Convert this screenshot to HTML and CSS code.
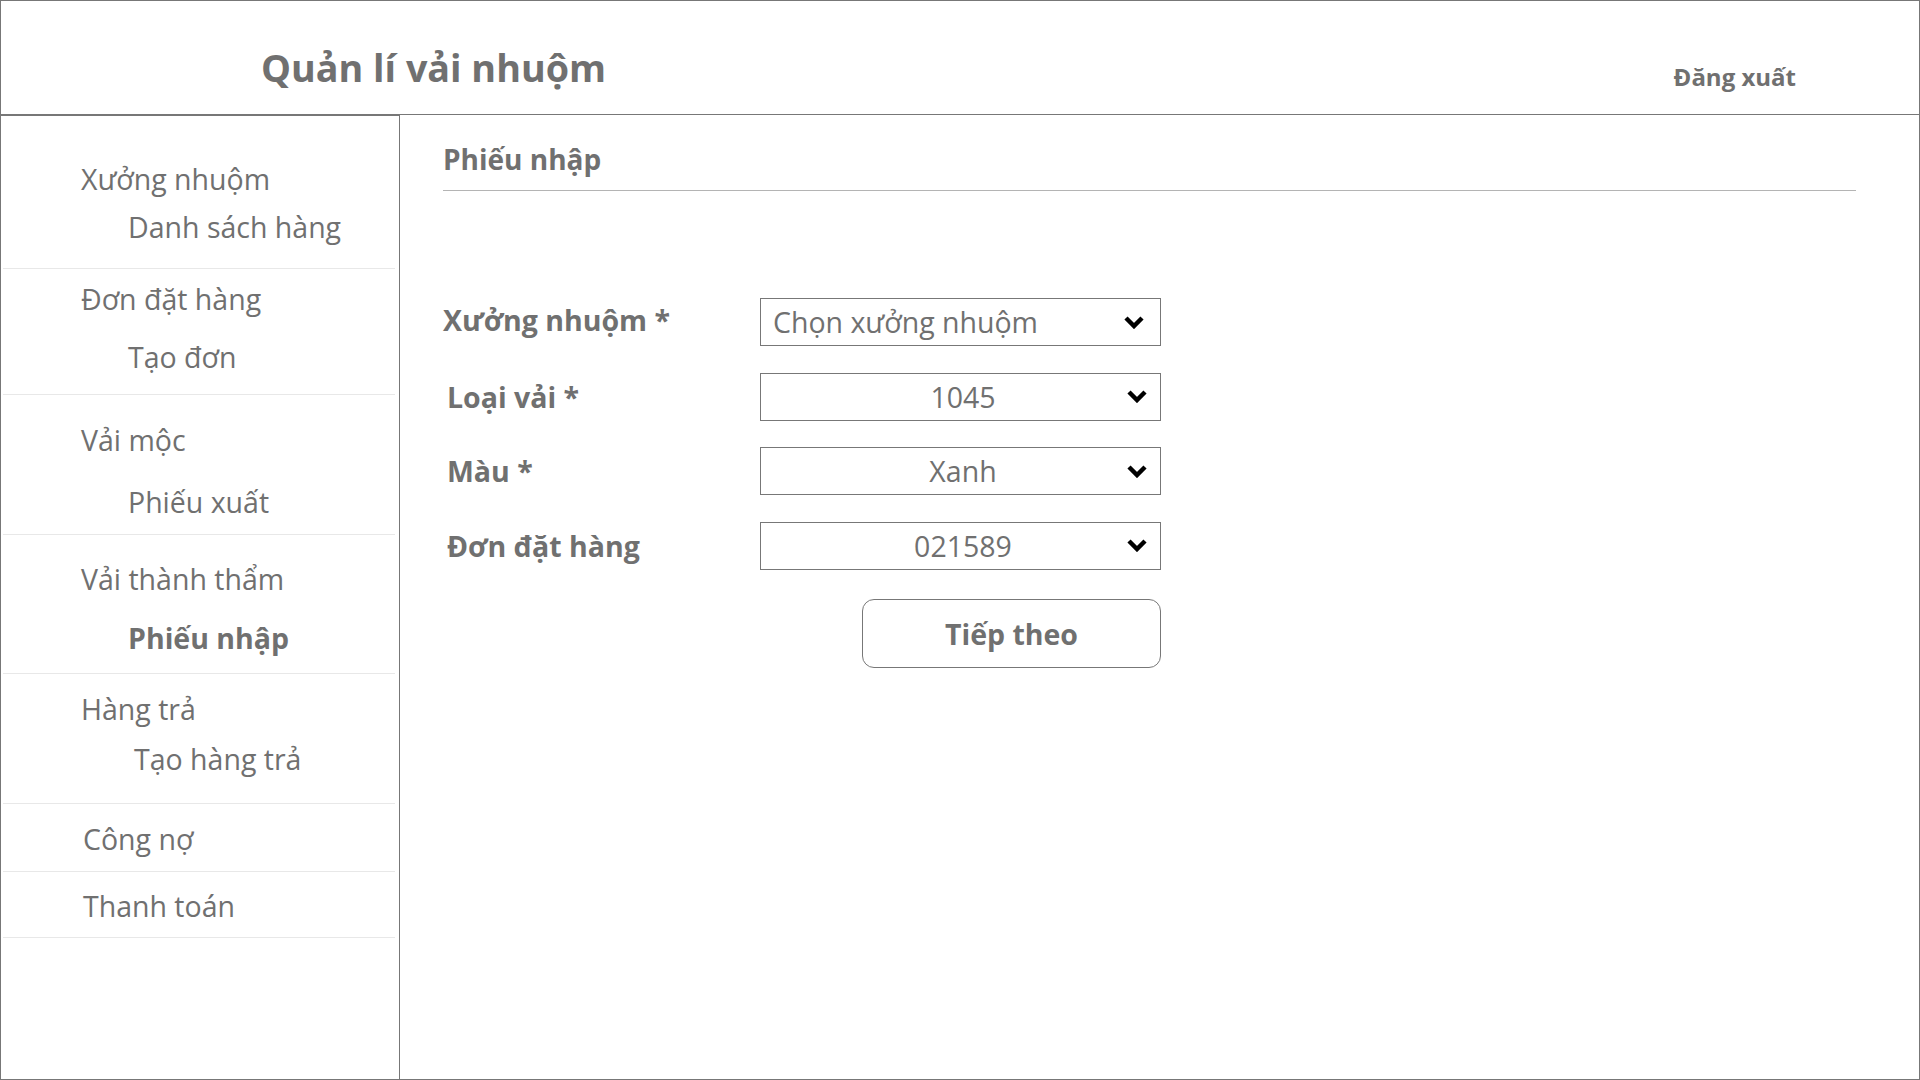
FILE: index.html
```html
<!DOCTYPE html>
<html lang="vi">
<head>
<meta charset="utf-8">
<title>Quản lí vải nhuộm</title>
<link rel="stylesheet" href="styles.css">
</head>
<body>
<div class="page">
  <header class="header">
    <h1 class="title">Quản lí vải nhuộm</h1>
    <a class="logout">Đăng xuất</a>
  </header>
  <div class="body">
    <nav class="sidebar">
      <div class="group">
        <div class="item">Xưởng nhuộm</div>
        <div class="sub">Danh sách hàng</div>
      </div>
      <div class="group">
        <div class="item">Đơn đặt hàng</div>
        <div class="sub">Tạo đơn</div>
      </div>
      <div class="group">
        <div class="item">Vải mộc</div>
        <div class="sub">Phiếu xuất</div>
      </div>
      <div class="group">
        <div class="item">Vải thành thẩm</div>
        <div class="sub active">Phiếu nhập</div>
      </div>
      <div class="group">
        <div class="item">Hàng trả</div>
        <div class="sub sub-wide">Tạo hàng trả</div>
      </div>
      <div class="group">
        <div class="item item-wide">Công nợ</div>
      </div>
      <div class="group">
        <div class="item item-wide">Thanh toán</div>
      </div>
    </nav>
    <main class="main">
      <h2 class="page-title">Phiếu nhập</h2>
      <form class="form">
        <div class="row">
          <label class="label label-first">Xưởng nhuộm *</label>
          <div class="select select-left">
            <span class="value">Chọn xưởng nhuộm</span>
            <svg class="chev" width="20" height="13" viewBox="0 0 20 13"><polyline points="2,2 10,10 18,2" fill="none" stroke="#000" stroke-width="4.5"/></svg>
          </div>
        </div>
        <div class="row">
          <label class="label">Loại vải *</label>
          <div class="select">
            <span class="value">1045</span>
            <svg class="chev" width="20" height="13" viewBox="0 0 20 13"><polyline points="2,2 10,10 18,2" fill="none" stroke="#000" stroke-width="4.5"/></svg>
          </div>
        </div>
        <div class="row">
          <label class="label">Màu *</label>
          <div class="select">
            <span class="value">Xanh</span>
            <svg class="chev" width="20" height="13" viewBox="0 0 20 13"><polyline points="2,2 10,10 18,2" fill="none" stroke="#000" stroke-width="4.5"/></svg>
          </div>
        </div>
        <div class="row">
          <label class="label">Đơn đặt hàng</label>
          <div class="select">
            <span class="value">021589</span>
            <svg class="chev" width="20" height="13" viewBox="0 0 20 13"><polyline points="2,2 10,10 18,2" fill="none" stroke="#000" stroke-width="4.5"/></svg>
          </div>
        </div>
        <div class="actions">
          <button type="button" class="btn">Tiếp theo</button>
        </div>
      </form>
    </main>
  </div>
</div>
</body>
</html>
```
FILE: styles.css
```css
* { box-sizing: border-box; }
html, body { margin: 0; padding: 0; }
body {
  font-family: "Open Sans", "Noto Sans", sans-serif;
  color: #707070;
  background: #fff;
}
.page {
  width: 1920px;
  height: 1080px;
  border: 1px solid #777;
  display: flex;
  flex-direction: column;
}
.header {
  height: 114px;
  flex: none;
  border-bottom: 1px solid #777;
  display: flex;
  align-items: flex-start;
  justify-content: space-between;
  padding-left: 260px;
  padding-right: 123px;
}
.title {
  margin: 0;
  padding-top: 45px;
  font-size: 37.7px;
  font-weight: 700;
  line-height: 44px;
}
.logout {
  font-size: 24px;
  font-weight: 700;
  line-height: 30px;
  padding-top: 61px;
}
.body {
  flex: 1;
  display: flex;
  min-height: 0;
}
.sidebar {
  width: 399px;
  flex: none;
  border-right: 1px solid #777;
  border-top: 1px solid #777;
}
.group {
  border-bottom: 1px solid #e8e8e8;
  width: 392px;
  margin-left: 2px;
}
.item, .sub {
  font-size: 28.5px;
  line-height: 36px;
  white-space: nowrap;
}
.item { padding-left: 78px; }
.item-wide { padding-left: 80px; }
.sub { padding-left: 125px; }
.sub-wide { padding-left: 131px; }
.active { font-weight: 700; }

.group:nth-child(1) { padding: 45px 0 23px; }
.group:nth-child(1) .sub { margin-top: 12px; }
.group:nth-child(2) { padding: 12px 0 19px; }
.group:nth-child(2) .sub { margin-top: 22px; }
.group:nth-child(3) { padding: 27px 0 14px; }
.group:nth-child(3) .sub { margin-top: 26px; }
.group:nth-child(4) { padding: 26px 0 17px; }
.group:nth-child(4) .sub { margin-top: 23px; }
.group:nth-child(5) { padding: 17px 0 26px; }
.group:nth-child(5) .sub { margin-top: 14px; }
.group:nth-child(6) { padding: 17px 0 14px; }
.group:nth-child(7) { padding: 16px 0 13px; }

.main {
  flex: 1;
  padding-left: 43px;
  padding-right: 63px;
}
.page-title {
  margin: 0;
  padding-top: 24px;
  padding-bottom: 11px;
  font-size: 28px;
  line-height: 40px;
  font-weight: 700;
  border-bottom: 1px solid #b4b4b4;
}
.form {
  margin-top: 107px;
  display: flex;
  flex-direction: column;
  gap: 26.5px;
  width: 718px;
}
.row {
  display: flex;
  align-items: center;
}
.label {
  width: 317px;
  font-size: 28.5px;
  font-weight: 700;
  padding-left: 4px;
}
.label-first { padding-left: 0; margin-top: -5px; }
.select {
  width: 401px;
  height: 48px;
  border: 1px solid #777;
  display: flex;
  align-items: center;
  font-size: 28.5px;
}
.select .value {
  flex: 1;
  text-align: center;
  padding-left: 38px;
}
.select-left .value {
  text-align: left;
  padding-left: 12px;
}
.chev {
  flex: none;
  margin-right: 13px;
}
.select-left .chev { margin-right: 16px; }
.actions {
  display: flex;
  justify-content: flex-end;
  margin-top: 3px;
}
.btn {
  width: 299px;
  height: 69px;
  border: 1px solid #777;
  border-radius: 12px;
  background: #fff;
  font-family: inherit;
  font-size: 28.5px;
  font-weight: 700;
  color: #707070;
}
```
